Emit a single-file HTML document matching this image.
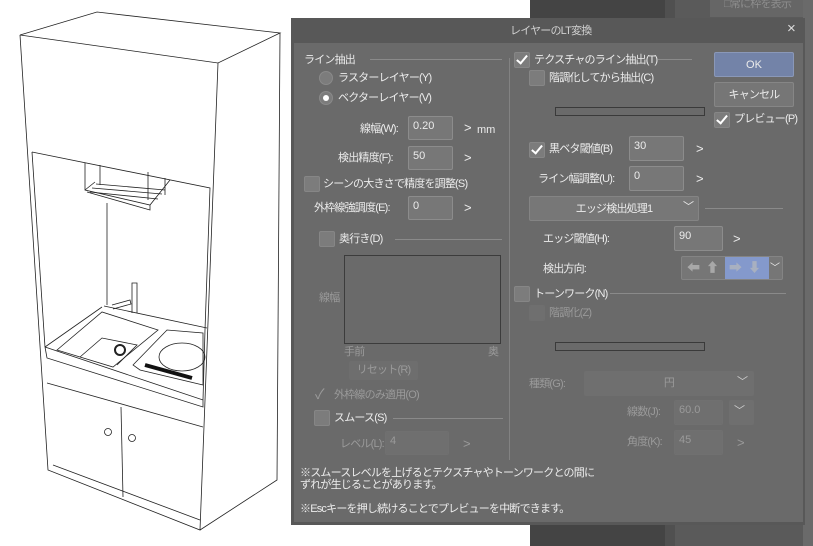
<!DOCTYPE html>
<html><head><meta charset="utf-8"><style>
*{margin:0;padding:0;box-sizing:border-box}
body{width:813px;height:546px;position:relative;overflow:hidden;background:#fff;font-family:"Liberation Sans","Noto Sans CJK JP",sans-serif;font-size:11px;color:#ececec}
.a{position:absolute;white-space:nowrap;line-height:14px;letter-spacing:-0.8px}
.g{color:#9a9a9a}
.in{position:absolute;background:#777;border:1px solid #8c8c8c;border-radius:2px;padding:2px 0 0 4px;font-size:11px;line-height:14px}
.dis{background:#6f6f6f;border-color:#707070;color:#9a9a9a}
.cb{position:absolute;width:16px;height:16px;background:#7c7c7c;border:1px solid #868686;border-radius:2px}
.cb.c::after{content:"";position:absolute;left:4px;top:0px;width:4px;height:9px;border:solid #fff;border-width:0 2px 2px 0;transform:rotate(40deg)}
.hl{position:absolute;height:1px;background:#8a8a8a}
.ar{position:absolute;font-size:13px;line-height:14px}
.bar{position:absolute;height:9px;border:1px solid #3a3a3a;background:#6a6a6a}
.btn{position:absolute;border-radius:2px;text-align:center;line-height:24px;letter-spacing:-0.8px}
</style></head><body>
<div style="position:absolute;left:530px;top:0;width:135px;height:546px;background:#444"></div>
<div style="position:absolute;left:665px;top:0;width:10px;height:546px;background:#505050"></div>
<div style="position:absolute;left:675px;top:0;width:138px;height:546px;background:#5a5a5a"></div>
<div style="position:absolute;left:710px;top:0;width:103px;height:17px;background:#666"></div>
<div class="a" style="left:724px;top:-3px;color:#8e8e8e">□常に枠を表示</div>
<div style="position:absolute;left:803px;top:0;width:10px;height:546px;background:#6a6a6a"></div>
<svg style="position:absolute;left:0;top:0" width="290" height="546" fill="none" stroke="#222" stroke-width="0.8">
<path d="M20 35 L97 12 L280 33 L218 63 Z"/>
<path d="M20 35 L48 470 L200 530 L218 63"/>
<path d="M280 33 L277 480 L200 530"/>
<path d="M32 152 L210 188 L205 330"/>
<path d="M32 152 L45 347"/>
<path d="M45 347 L102 307 M104 306 L207 328"/>
<path d="M45 347 L203 400 L205 330 M45 347 L47 358 L203 407 L203 400"/>
<path d="M47 383 L203 427"/>
<path d="M121 407 L123 497"/>
<path d="M53 465 L200 520"/>
<path d="M85 163 L85 190 L150 205 L170 180 M85 190 L95 182 M150 205 L150 210 L87 192 M100 165 L100 185 M148 172 L148 200 M165 178 L165 195"/>
<path d="M90 192 L158 199 M92 188 L162 194 M96 184 L165 190"/>
<path d="M107 203 L107 305"/>
<path d="M57 350 L102 312 L158 330 L113 367 Z"/>
<path d="M80 357 L102 338 L137 345 L117 365"/>
<path d="M133 365 L167 330 L203 333 L203 385 L140 370 Z"/>
<ellipse cx="182" cy="357" rx="23" ry="14"/>
<path d="M132 313 L132 283 L137 283 L137 313 M112 305 L130 300 L131 304 L113 309"/>
<circle cx="120" cy="350" r="5" stroke-width="2"/>
<path d="M145 365 L192 378" stroke-width="4" stroke="#111"/>
<circle cx="108" cy="432" r="3.5"/><circle cx="132" cy="438" r="3.5"/>
</svg>
<div style="position:absolute;left:291px;top:18px;width:514px;height:507px;background:#585858"></div>
<div class="a" style="left:510px;top:24px;color:#cfcfcf">レイヤーのLT変換</div>
<div class="a" style="left:787px;top:22px;font-size:15px;color:#ddd">×</div>
<div style="position:absolute;left:294px;top:43px;width:509px;height:479px;background:#6a6a6a"></div>
<div style="position:absolute;left:509px;top:58px;width:1px;height:402px;background:#828282"></div>
<div class="a" style="left:304px;top:53px">ライン抽出</div><div class="hl" style="left:370px;top:59px;width:132px"></div>
<div style="position:absolute;left:319px;top:71px;width:14px;height:14px;border-radius:50%;background:#7c7c7c;border:1px solid #8a8a8a"></div>
<div class="a" style="left:338px;top:71px">ラスターレイヤー(Y)</div>
<div style="position:absolute;left:319px;top:91px;width:14px;height:14px;border-radius:50%;background:#7c7c7c;border:1px solid #8a8a8a"></div>
<div style="position:absolute;left:323px;top:95px;width:6px;height:6px;border-radius:50%;background:#fff"></div>
<div class="a" style="left:338px;top:91px">ベクターレイヤー(V)</div>
<div class="a" style="left:360px;top:122px">線幅(W):</div><div class="in" style="left:408px;top:116px;width:45px;height:24px">0.20</div>
<div class="ar" style="left:464px;top:121px">&gt;</div><div class="a" style="left:477px;top:123px;letter-spacing:0">mm</div>
<div class="a" style="left:338px;top:151px">検出精度(F):</div><div class="in" style="left:408px;top:146px;width:45px;height:24px">50</div><div class="ar" style="left:464px;top:151px">&gt;</div>
<div class="cb" style="left:304px;top:176px"></div><div class="a" style="left:323px;top:177px">シーンの大きさで精度を調整(S)</div>
<div class="a" style="left:314px;top:201px">外枠線強調度(E):</div><div class="in" style="left:408px;top:196px;width:45px;height:24px">0</div><div class="ar" style="left:464px;top:201px">&gt;</div>
<div class="cb" style="left:319px;top:231px"></div><div class="a" style="left:339px;top:232px">奥行き(D)</div><div class="hl" style="left:395px;top:239px;width:107px"></div>
<div style="position:absolute;left:344px;top:255px;width:157px;height:89px;border:1px solid #3c3c3c"></div>
<div class="a g" style="left:319px;top:291px">線幅</div>
<div class="a g" style="left:344px;top:345px">手前</div><div class="a g" style="left:488px;top:345px">奥</div>
<div class="btn g" style="left:349px;top:361px;width:69px;height:19px;line-height:18px;background:#6e6e6e">リセット(R)</div>
<div class="a g" style="left:315px;top:387px;font-size:14px">✓</div><div class="a g" style="left:334px;top:388px">外枠線のみ適用(O)</div>
<div class="cb" style="left:314px;top:410px"></div><div class="a" style="left:334px;top:411px">スムース(S)</div><div class="hl" style="left:393px;top:418px;width:110px"></div>
<div class="a g" style="left:340px;top:437px">レベル(L):</div><div class="in dis" style="left:385px;top:431px;width:64px;height:24px">4</div><div class="ar g" style="left:463px;top:437px">&gt;</div>
<div class="cb c" style="left:514px;top:52px"></div><div class="a" style="left:534px;top:53px">テクスチャのライン抽出(T)</div><div class="hl" style="left:658px;top:59px;width:34px"></div>
<div class="cb" style="left:529px;top:70px"></div><div class="a" style="left:549px;top:71px">階調化してから抽出(C)</div>
<div class="bar" style="left:555px;top:107px;width:150px"></div>
<div class="btn" style="left:714px;top:52px;width:80px;height:25px;background:#7383a8;border:1px solid #8a98b8;letter-spacing:0">OK</div>
<div class="btn" style="left:714px;top:82px;width:80px;height:25px;background:#767676;border:1px solid #868686">キャンセル</div>
<div class="cb c" style="left:714px;top:112px"></div><div class="a" style="left:734px;top:112px">プレビュー(P)</div>
<div class="cb c" style="left:529px;top:142px"></div><div class="a" style="left:549px;top:142px">黒ベタ閾値(B)</div>
<div class="in" style="left:629px;top:136px;width:55px;height:25px">30</div><div class="ar" style="left:696px;top:142px">&gt;</div>
<div class="a" style="left:538px;top:172px">ライン幅調整(U):</div><div class="in" style="left:629px;top:166px;width:55px;height:25px">0</div><div class="ar" style="left:696px;top:172px">&gt;</div>
<div class="btn" style="left:529px;top:196px;width:170px;height:25px;background:#777;border:1px solid #848484">エッジ検出処理1</div><div class="a" style="left:683px;top:200px;font-size:11px">﹀</div>
<div class="hl" style="left:705px;top:208px;width:78px"></div>
<div class="a" style="left:543px;top:232px">エッジ閾値(H):</div><div class="in" style="left:674px;top:226px;width:49px;height:25px">90</div><div class="ar" style="left:733px;top:232px">&gt;</div>
<div class="a" style="left:543px;top:262px">検出方向:</div>
<div style="position:absolute;left:681px;top:256px;width:102px;height:24px;background:#767676;border:1px solid #848484;border-radius:2px"></div>
<div style="position:absolute;left:725px;top:257px;width:44px;height:22px;background:#8499cc"></div>
<div class="a" style="left:687px;top:261px;color:#a8a8a8;font-size:13px;letter-spacing:6px">⬅⬆</div>
<div class="a" style="left:729px;top:261px;color:#a8b0c0;font-size:13px;letter-spacing:6px">➡⬇</div>
<div class="a" style="left:770px;top:262px;font-size:10px">﹀</div>
<div class="cb" style="left:514px;top:286px"></div><div class="a" style="left:534px;top:287px">トーンワーク(N)</div><div class="hl" style="left:610px;top:293px;width:176px"></div>
<div class="cb" style="left:529px;top:305px;background:#6f6f6f;border-color:#6f6f6f"></div><div class="a g" style="left:549px;top:306px">階調化(Z)</div>
<div class="bar" style="left:555px;top:342px;width:150px"></div>
<div class="a g" style="left:529px;top:377px">種類(G):</div>
<div class="btn g" style="left:584px;top:371px;width:170px;height:25px;background:#6f6f6f">円</div><div class="a" style="left:737px;top:375px;font-size:11px;color:#ccc">﹀</div>
<div class="a g" style="left:627px;top:405px">線数(J):</div><div class="in dis" style="left:674px;top:400px;width:49px;height:25px">60.0</div>
<div class="btn" style="left:729px;top:400px;width:25px;height:25px;background:#6f6f6f"></div><div class="a" style="left:734px;top:404px;font-size:11px;color:#ccc">﹀</div>
<div class="a g" style="left:627px;top:435px">角度(K):</div><div class="in dis" style="left:674px;top:430px;width:49px;height:25px">45</div><div class="ar g" style="left:737px;top:436px">&gt;</div>
<div class="a" style="left:300px;top:467px;line-height:12px">※スムースレベルを上げるとテクスチャやトーンワークとの間に<br>ずれが生じることがあります。</div>
<div class="a" style="left:300px;top:502px">※Escキーを押し続けることでプレビューを中断できます。</div>
</body></html>
